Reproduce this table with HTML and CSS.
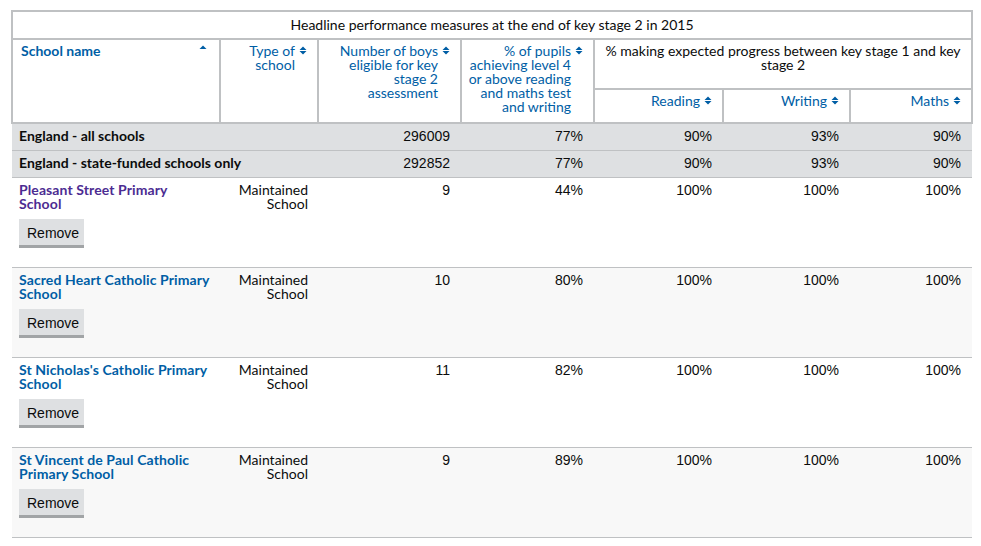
FILE: index.html
```html
<!DOCTYPE html>
<html lang="en">
<head>
<meta charset="utf-8">
<title>Compare schools</title>
<link rel="stylesheet" href="styles.css">
</head>
<body>
<table class="perf">
  <colgroup>
    <col class="c1"><col class="c2"><col class="c3"><col class="c4"><col class="c5"><col class="c6"><col class="c7">
  </colgroup>
  <thead>
    <tr class="cap-row">
      <th colspan="7" class="cap">Headline performance measures at the end of key stage 2 in 2015</th>
    </tr>
    <tr class="head-row">
      <th rowspan="2" class="h-name"><a href="#" class="sort sort-asc">School name<svg class="ico" width="8" height="9" viewBox="0 0 8 9"><path d="M0.5 4 L4 0.5 L7.5 4 Z" fill="#005ea5"/></svg></a></th>
      <th rowspan="2" class="h-num"><a href="#" class="sort">Type of school<svg class="ico" width="8" height="9" viewBox="0 0 8 9"><path d="M0.5 4 L4 0.5 L7.5 4 Z M0.5 5 L4 8.5 L7.5 5 Z" fill="#005ea5"/></svg></a></th>
      <th rowspan="2" class="h-num"><a href="#" class="sort">Number of boys eligible for key stage 2 assessment<svg class="ico" width="8" height="9" viewBox="0 0 8 9"><path d="M0.5 4 L4 0.5 L7.5 4 Z M0.5 5 L4 8.5 L7.5 5 Z" fill="#005ea5"/></svg></a></th>
      <th rowspan="2" class="h-num"><a href="#" class="sort">% of pupils achieving level 4 or above reading and maths test and writing<svg class="ico" width="8" height="9" viewBox="0 0 8 9"><path d="M0.5 4 L4 0.5 L7.5 4 Z M0.5 5 L4 8.5 L7.5 5 Z" fill="#005ea5"/></svg></a></th>
      <th colspan="3" class="h-group">% making expected progress between key stage 1 and key stage 2</th>
    </tr>
    <tr class="sub-row">
      <th class="h-num"><a href="#" class="sort">Reading<svg class="ico" width="8" height="9" viewBox="0 0 8 9"><path d="M0.5 4 L4 0.5 L7.5 4 Z M0.5 5 L4 8.5 L7.5 5 Z" fill="#005ea5"/></svg></a></th>
      <th class="h-num"><a href="#" class="sort">Writing<svg class="ico" width="8" height="9" viewBox="0 0 8 9"><path d="M0.5 4 L4 0.5 L7.5 4 Z M0.5 5 L4 8.5 L7.5 5 Z" fill="#005ea5"/></svg></a></th>
      <th class="h-num"><a href="#" class="sort">Maths<svg class="ico" width="8" height="9" viewBox="0 0 8 9"><path d="M0.5 4 L4 0.5 L7.5 4 Z M0.5 5 L4 8.5 L7.5 5 Z" fill="#005ea5"/></svg></a></th>
    </tr>
  </thead>
  <tbody>
    <tr class="nat">
      <td class="t-name" colspan="2">England - all schools</td>
      <td class="num">296009</td><td class="num">77%</td><td class="num">90%</td><td class="num">93%</td><td class="num">90%</td>
    </tr>
    <tr class="nat">
      <td class="t-name" colspan="2">England - state-funded schools only</td>
      <td class="num">292852</td><td class="num">77%</td><td class="num">90%</td><td class="num">93%</td><td class="num">90%</td>
    </tr>
    <tr class="school">
      <td class="t-name"><a href="#" class="school-link visited">Pleasant Street Primary School</a><button class="remove">Remove</button></td>
      <td class="type">Maintained School</td>
      <td class="num">9</td><td class="num">44%</td><td class="num">100%</td><td class="num">100%</td><td class="num">100%</td>
    </tr>
    <tr class="school alt">
      <td class="t-name"><a href="#" class="school-link">Sacred Heart Catholic Primary School</a><button class="remove">Remove</button></td>
      <td class="type">Maintained School</td>
      <td class="num">10</td><td class="num">80%</td><td class="num">100%</td><td class="num">100%</td><td class="num">100%</td>
    </tr>
    <tr class="school">
      <td class="t-name"><a href="#" class="school-link">St Nicholas's Catholic Primary School</a><button class="remove">Remove</button></td>
      <td class="type">Maintained School</td>
      <td class="num">11</td><td class="num">82%</td><td class="num">100%</td><td class="num">100%</td><td class="num">100%</td>
    </tr>
    <tr class="school alt">
      <td class="t-name"><a href="#" class="school-link">St Vincent de Paul Catholic Primary School</a><button class="remove">Remove</button></td>
      <td class="type">Maintained School</td>
      <td class="num">9</td><td class="num">89%</td><td class="num">100%</td><td class="num">100%</td><td class="num">100%</td>
    </tr>
  </tbody>
</table>
</body>
</html>
```
FILE: styles.css
```css
html, body {
  margin: 0;
  padding: 0;
  background: #fff;
}
body {
  padding: 10px 10px 0 11px;
  font-family: Lato, "Liberation Sans", sans-serif;
  font-size: 14px;
  color: #0b0c0c;
}
.perf {
  border-collapse: collapse;
  table-layout: fixed;
  width: 960px;
}
.c1 { width: 208px; }
.c2 { width: 98px; }
.c3 { width: 143px; }
.c4 { width: 133px; }
.c5 { width: 129px; }
.c6 { width: 127px; }
.c7 { width: 122px; }

.perf th {
  border: 2px solid #bfc1c3;
  font-weight: normal;
  line-height: 14px;
  vertical-align: top;
  padding: 4px 10px 4px 4px;
}
.cap-row { height: 28px; }
.perf th.cap {
  text-align: center;
  vertical-align: middle;
  padding: 0 10px;
  line-height: 16px;
}
.head-row { height: 50px; }
.sub-row { height: 34px; }
.perf th.h-group {
  text-align: center;
  padding: 4px 10px;
}
.perf th.h-name {
  text-align: left;
  padding-left: 8px;
}
.h-num { text-align: right; }
.sort {
  color: #005ea5;
  text-decoration: none;
  display: inline-block;
  position: relative;
  padding-right: 12px;
}
.h-name .sort {
  display: block;
  font-weight: bold;
}
.ico {
  position: absolute;
  right: 0;
  top: 2px;
}
.h-name .ico { right: 2px; top: 1px; }

.perf td {
  padding: 0 10px 0 7px;
  vertical-align: top;
  line-height: 14px;
  border-bottom: 1px solid #bfc1c3;
}
.perf .nat td {
  background: #dee0e2;
  height: 24px;
  vertical-align: middle;
  padding-bottom: 2px;
}
.nat .t-name { font-weight: bold; }
.perf td.num {
  text-align: right;
  padding-right: 11px;
  font-family: "Liberation Sans", Arial, sans-serif;
}
.school td {
  height: 84px;
  padding-top: 5px;
}
.perf .school .t-name { padding-right: 9px; }
.school.alt td { background: #f8f8f8; }
.type { text-align: right; }
.school-link {
  display: block;
  color: #005ea5;
  font-weight: bold;
  text-decoration: none;
  letter-spacing: 0.1px;
}
.school-link.visited { color: #4c2c92; }
.remove {
  display: block;
  margin-top: 8px;
  background: #dee0e2;
  border: 0;
  border-bottom: 3px solid #a1a4a6;
  font-family: "Liberation Sans", Arial, sans-serif;
  font-size: 14px;
  color: #0b0c0c;
  padding: 5px 8px 3px;
  width: 65px;
  height: 29px;
}
```
